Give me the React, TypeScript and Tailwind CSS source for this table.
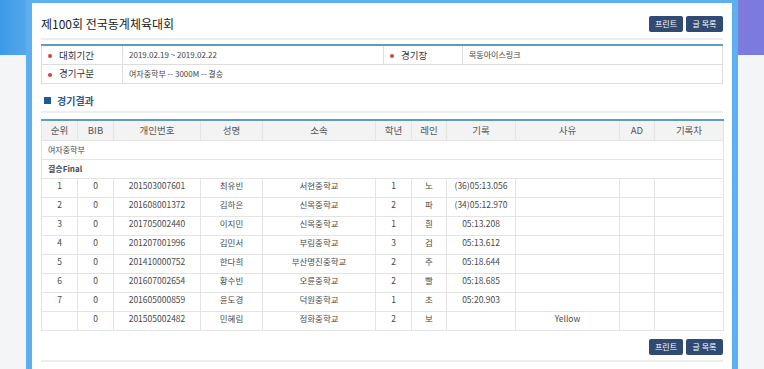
import React from 'react'

const info = { period: '2019.02.19 ~ 2019.02.22', venue: '목동아이스링크', division: '여자중학부 -- 3000M -- 결승' }

const columns = [
  { label: '순위', w: 'w-[36px]' },
  { label: 'BIB', w: 'w-[36px]' },
  { label: '개인번호', w: 'w-[87px]' },
  { label: '성명', w: 'w-[62px]' },
  { label: '소속', w: 'w-[113px]' },
  { label: '학년', w: 'w-[36px]' },
  { label: '레인', w: 'w-[35px]' },
  { label: '기록', w: 'w-[69px]' },
  { label: '사유', w: 'w-[104px]' },
  { label: 'AD', w: 'w-[35px]' },
  { label: '기록차', w: 'w-[69px]' },
]

const results = [
  { rank: '1', bib: '0', no: '201503007601', name: '최유빈', team: '서현중학교', grade: '1', lane: '노', record: '(36)05:13.056', reason: '' },
  { rank: '2', bib: '0', no: '201608001372', name: '김하은', team: '신목중학교', grade: '2', lane: '파', record: '(34)05:12.970', reason: '' },
  { rank: '3', bib: '0', no: '201705002440', name: '이지민', team: '신목중학교', grade: '1', lane: '흰', record: '05:13.208', reason: '' },
  { rank: '4', bib: '0', no: '201207001996', name: '김민서', team: '부림중학교', grade: '3', lane: '검', record: '05:13.612', reason: '' },
  { rank: '5', bib: '0', no: '201410000752', name: '한다희', team: '부산명진중학교', grade: '2', lane: '주', record: '05:18.644', reason: '' },
  { rank: '6', bib: '0', no: '201607002654', name: '황수빈', team: '오륜중학교', grade: '2', lane: '빨', record: '05:18.685', reason: '' },
  { rank: '7', bib: '0', no: '201605000859', name: '윤도경', team: '덕원중학교', grade: '1', lane: '초', record: '05:20.903', reason: '' },
  { rank: '', bib: '0', no: '201505002482', name: '민혜림', team: '정화중학교', grade: '2', lane: '보', record: '', reason: 'Yellow' },
]

function Buttons() {
  return (
    <div className="flex gap-[3px]">
      <button className="h-[16px] w-[34px] rounded-[2px] bg-[#2f4b74] text-[8px] leading-[16px] text-white">프린트</button>
      <button className="h-[16px] w-[37px] rounded-[2px] bg-[#2f4b74] text-[8px] leading-[16px] text-white">글 목록</button>
    </div>
  )
}

function Bullet() {
  return <span className="mr-[7px] inline-block h-[4px] w-[4px] rounded-full bg-[#d6423a] align-middle" />
}

export default function App() {
  const cell = 'h-[19px] border border-[#e4e4e4] pt-0 text-center align-top leading-[12px]'
  const infoCell = 'h-[19px] border border-[#dddddd] pl-[6px]'

  return (
    <div
      className="h-[369px] w-[764px] overflow-hidden bg-[linear-gradient(to_bottom,transparent_55px,#f4f5f7_55px),linear-gradient(to_right,#3c9be8,#5aa8ec_4%,#7c7bdd_97%)] px-[26px] text-[#333]"
      style={{ fontFamily: '"Noto Sans CJK KR", "Noto Sans", sans-serif' }}
    >
      <div className="h-[380px] border-x-[6px] border-t-[3px] border-[#5daff0] bg-white pl-[9px] pr-[9px]">
        {/* 제목 */}
        <div className="border-b-2 border-[#eeeeee] pb-[3px] pt-[10px]">
          <div className="flex h-[22px] items-center justify-between">
            <h1 className="text-[12px] leading-[22px] text-[#222]">제100회 전국동계체육대회</h1>
            <Buttons />
          </div>
        </div>

        {/* 대회 정보 */}
        <table className="mt-[4px] w-full table-fixed border-collapse border-t-2 border-t-[#5b9cc3] text-[8px] text-[#444]">
          <colgroup>
            <col className="w-[81px]" />
            <col className="w-[261px]" />
            <col className="w-[79px]" />
            <col />
          </colgroup>
          <tbody>
            <tr>
              <td className={`${infoCell} border-t-0 text-[9.5px] text-[#333]`}><Bullet />대회기간</td>
              <td className={`${infoCell} border-t-0`}>{info.period}</td>
              <td className={`${infoCell} border-t-0 text-[9.5px] text-[#333]`}><Bullet />경기장</td>
              <td className={`${infoCell} border-t-0`}>{info.venue}</td>
            </tr>
            <tr>
              <td className={`${infoCell} text-[9.5px] text-[#333]`}><Bullet />경기구분</td>
              <td colSpan={3} className={infoCell}>{info.division}</td>
            </tr>
          </tbody>
        </table>

        {/* 경기결과 */}
        <div className="mt-[10px] flex h-[19px] items-center border-b-2 border-[#eeeeee] pb-[3px] pl-[3px]">
          <span className="mr-[6px] inline-block h-[7px] w-[7px] bg-[#1d5997]" />
          <span className="text-[10px] font-bold text-[#2b5d91]">경기결과</span>
        </div>

        <table className="mt-[6px] w-full table-fixed border-collapse border-t-2 border-t-[#5b9cc3] text-[8.5px] text-[#4a4a4a]">
          <colgroup>
            {columns.map((c) => (
              <col key={c.label} className={c.w} />
            ))}
          </colgroup>
          <thead>
            <tr>
              {columns.map((c) => (
                <th key={c.label} className="h-[21px] border border-t-0 border-[#e4e4e4] bg-[#f3f3f3] text-[9.5px] font-normal text-[#555]">
                  {c.label}
                </th>
              ))}
            </tr>
          </thead>
          <tbody>
            <tr>
              <td colSpan={11} className="h-[19px] border border-[#e4e4e4] pl-[6px] text-[8px]">여자중학부</td>
            </tr>
            <tr>
              <td colSpan={11} className="h-[19px] border border-[#e4e4e4] pl-[6px] text-[8px] font-bold">결승Final</td>
            </tr>
            {results.map((r) => (
              <tr key={r.no}>
                <td className={cell}>{r.rank}</td>
                <td className={cell}>{r.bib}</td>
                <td className={cell}>{r.no}</td>
                <td className={cell}>{r.name}</td>
                <td className={cell}>{r.team}</td>
                <td className={cell}>{r.grade}</td>
                <td className={cell}>{r.lane}</td>
                <td className={cell}>{r.record}</td>
                <td className={cell}>{r.reason}</td>
                <td className={cell}></td>
                <td className={cell}></td>
              </tr>
            ))}
          </tbody>
        </table>

        <div className="flex justify-end border-b-2 border-[#eeeeee] pb-[5px] pt-[8px]">
          <Buttons />
        </div>
      </div>
    </div>
  )
}
